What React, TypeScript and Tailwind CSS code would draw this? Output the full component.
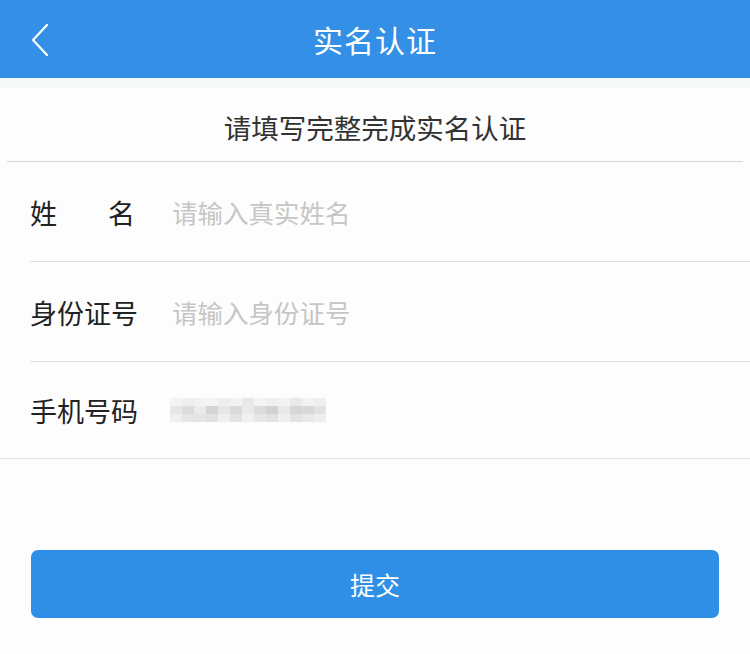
import React from 'react';

const font = { fontFamily: '"Noto Sans CJK SC", "Noto Sans", sans-serif' };

// mosaic that stands in for the blurred phone number
const mosaic = [
  ['#f3f3f3', '#eeeeee', '#f2f2f2', '#f4f4f4', '#ededed', '#f3f3f3', '#e8e8e8', '#f3f3f3', '#efefef', '#f2f2f2', '#e9e9e9', '#f2f2f2', '#eeeeee'],
  ['#e6e6e6', '#dcdcdc', '#ebebeb', '#d4d4d4', '#e6e6e6', '#dadada', '#eaeaea', '#dcdcdc', '#d2d2d2', '#e8e8e8', '#d6d6d6', '#d8d8d8', '#e2e2e2'],
  ['#efefef', '#e6e6e6', '#e4e4e4', '#e0e0e0', '#eeeeee', '#e3e3e3', '#f0f0f0', '#e6e6e6', '#e2e2e2', '#eeeeee', '#e3e3e3', '#e9e9e9', '#eeeeee'],
];

const Row = ({ label, children }: { label: React.ReactNode; children: React.ReactNode }) => (
  <div className="flex items-center h-[100px]">
    <div className="flex items-center h-full ml-[30px] flex-1 border-b border-[#dddddd]">
      <div className="w-[142px] shrink-0 text-[27px] text-[#222] leading-none pt-[2px]">{label}</div>
      <span className="text-[25.5px] text-[#c6c6c6] leading-none">{children}</span>
    </div>
  </div>
);

export default function App() {
  return (
    <div className="w-[750px] h-[654px] bg-[#fdfdfd] overflow-hidden" style={font}>
      <header className="relative h-[78px] bg-[#3390e6] flex items-center justify-center">
        <svg className="absolute left-[30px] top-[23px]" width="20" height="34" viewBox="0 0 20 34" fill="none">
          <path d="M17 2 L3 17 L17 32" stroke="#fff" strokeWidth="2.2" strokeLinecap="round" strokeLinejoin="round" />
        </svg>
        <h1 className="text-[30px] text-white leading-none tracking-[1px]">实名认证</h1>
      </header>
      <div className="h-[10px] bg-[#f4f9fa]" />
      <div className="mx-[7px] h-[74px] flex items-center justify-center border-b border-[#d6d6d6]">
        <p className="text-[27.5px] text-[#333] leading-none pt-[6px]">请填写完整完成实名认证</p>
      </div>

      <Row label={<span className="flex justify-between w-[105px]"><span>姓</span><span>名</span></span>}>
        请输入真实姓名
      </Row>
      <Row label="身份证号">请输入身份证号</Row>
      <div className="flex items-center h-[97px] border-b border-[#e3e3e3] pl-[30px]">
        <div className="w-[140px] shrink-0 text-[27px] text-[#222] leading-none">手机号码</div>
        <div className="flex flex-col">
          {mosaic.map((r, i) => (
            <div key={i} className="flex">
              {r.map((c, j) => (
                <span key={j} className="block w-[12px] h-[8px]" style={{ background: c }} />
              ))}
            </div>
          ))}
        </div>
      </div>

      <div className="px-[31px] pt-[91px]">
        <button className="w-full h-[68px] rounded-[7px] bg-[#2f8fe6] text-white text-[25px] leading-none">提交</button>
      </div>
    </div>
  );
}
